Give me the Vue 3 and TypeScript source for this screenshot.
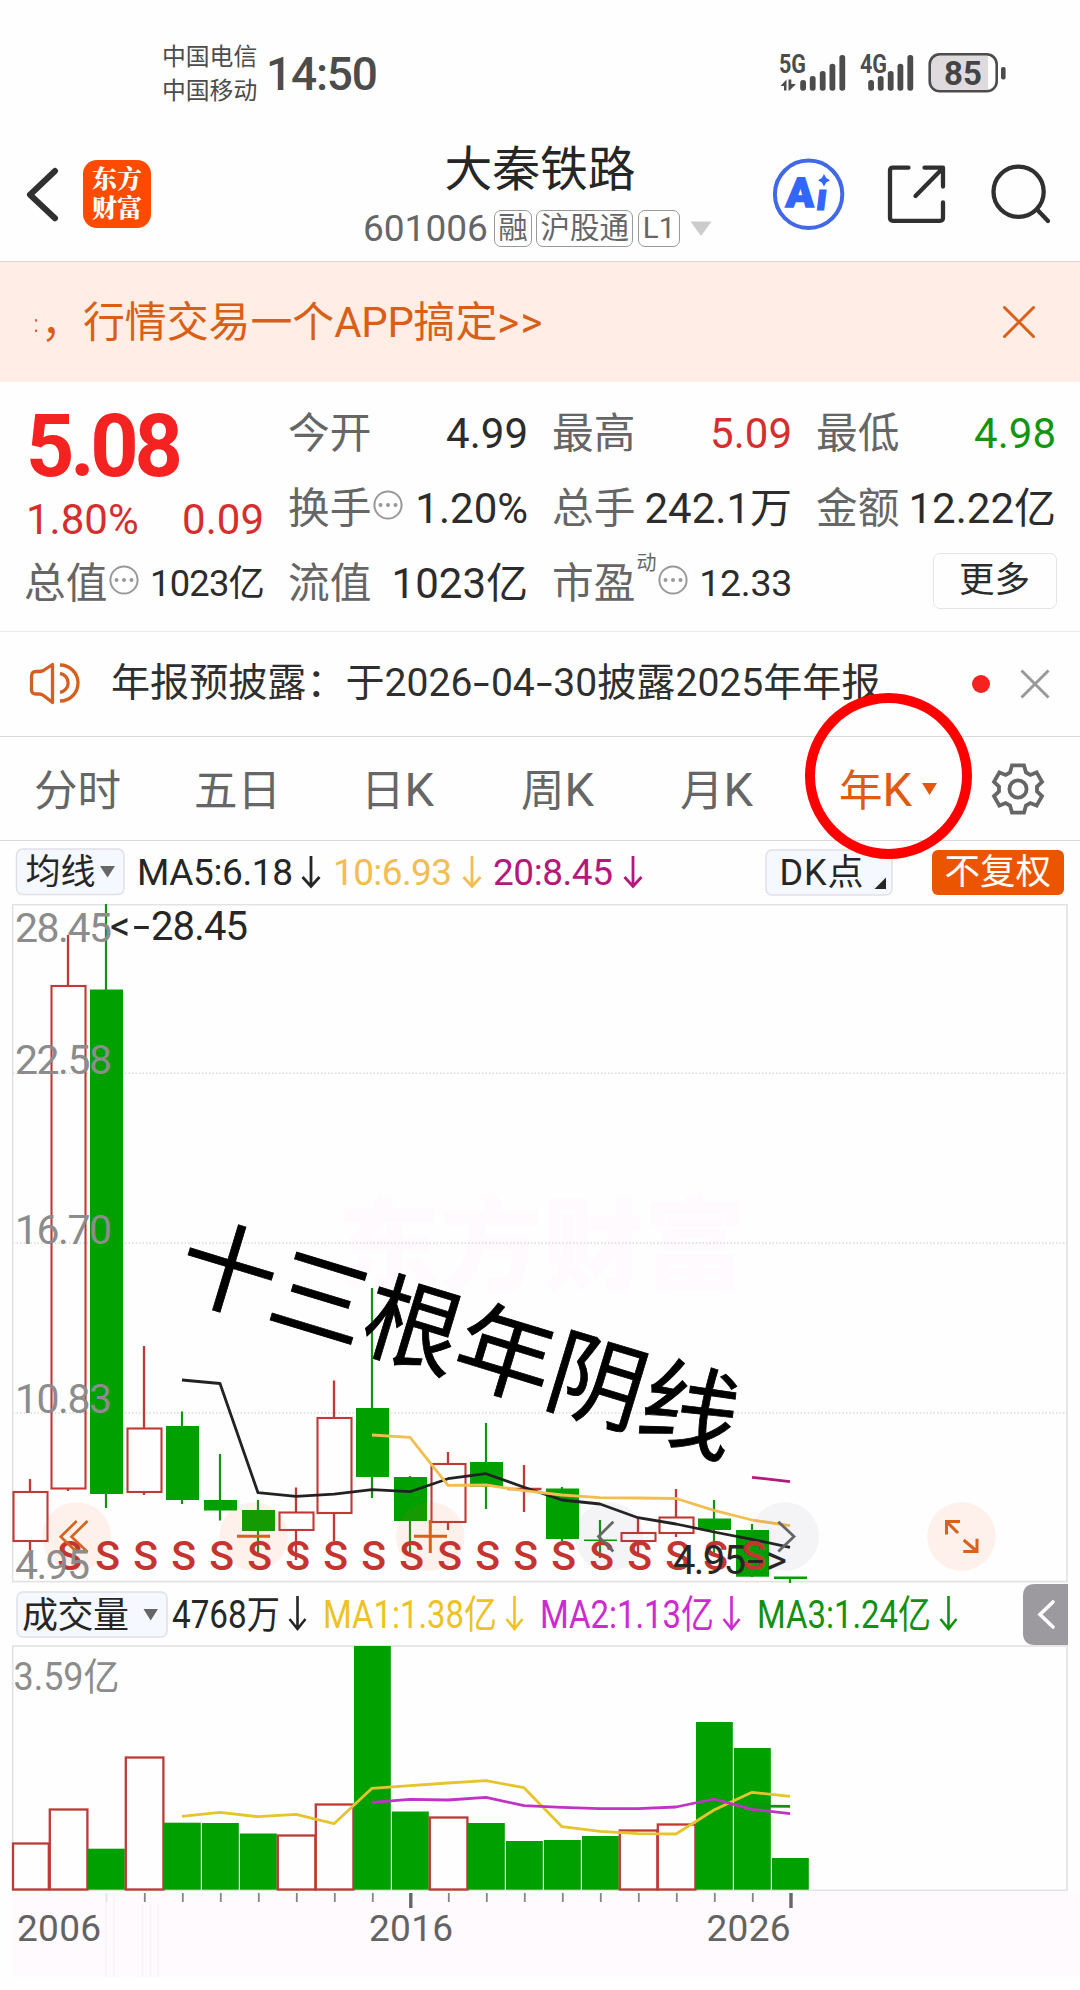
<script setup lang="ts">
type Point = [number, number]

interface Candle {
  up: boolean
  high: number
  top: number
  bottom: number
  low: number
  volume: number
}

const STEP = 38
const FIRST = 30
const cx = (i: number): number => FIRST + STEP * i

const raw: [number, number, number, number, number, number][] = [
  [1, 1479, 1492, 1541, 1563, 1843],
  [1, 935, 986, 1488.5, 1491, 1809],
  [0, 904, 989.5, 1494, 1508, 1848.7],
  [1, 1346, 1428.5, 1492, 1495, 1757],
  [0, 1411.5, 1426, 1500, 1504, 1822.7],
  [0, 1454, 1500, 1510.5, 1520.5, 1823],
  [0, 1500, 1510, 1531, 1555, 1833.5],
  [1, 1487.5, 1512.5, 1530, 1560, 1835],
  [1, 1380.5, 1418, 1513, 1541, 1804],
  [0, 1288, 1408, 1477, 1498, 1646],
  [0, 1476, 1477, 1521, 1553, 1811.5],
  [1, 1452, 1464, 1522, 1530, 1817],
  [0, 1423, 1462, 1487, 1509, 1823],
  [1, 1465, 1489, 1489, 1512, 1841],
  [0, 1487, 1488.5, 1539, 1541, 1840],
  [0, 1520, 1539.5, 1541, 1558, 1836],
  [1, 1518, 1533, 1541, 1555, 1830],
  [1, 1489, 1517.5, 1533, 1537, 1824],
  [0, 1500, 1518.5, 1530, 1555, 1722],
  [0, 1524, 1530, 1576.7, 1577, 1748],
  [0, 1577, 1576.5, 1579, 1583, 1858],
]

const candles: Candle[] = raw.map(([up, high, top, bottom, low, volume]) => ({
  up: up === 1, high, top, bottom, low, volume,
}))

// The 2019 volume bar is green although its candle closed flat.
const volumeUp = (i: number): boolean => candles[i].up && i !== 13

const line = (start: number, ys: number[]): string =>
  ys.map((y, i): Point => [cx(start + i), y]).map((p) => p.join(',')).join(' ')

const ma5 = line(4, [1380, 1383.5, 1492.7, 1496.3, 1494.2, 1489.7, 1491.7, 1478.7, 1473.7, 1487.3, 1500, 1504, 1517.7, 1524, 1532, 1539.3, 1547.3])
const ma10 = line(9, [1435, 1437.3, 1485.3, 1485, 1490.7, 1495, 1497.7, 1498, 1498.5, 1510.3, 1520, 1525.7])
const ma20 = line(19, [1477.3, 1481.7])
const vol1 = line(4, [1816.3, 1812.3, 1816.7, 1814.3, 1823.7, 1788.3, 1785.7, 1783, 1780.7, 1787.7, 1826.7, 1831.3, 1833.7, 1834, 1810, 1792.3, 1796.3])
const vol2 = line(9, [1802.3, 1799.3, 1800, 1797.3, 1805.7, 1807.3, 1808.7, 1808.7, 1807, 1799, 1809.3, 1813.7])

const gridLines = [1073.2, 1243, 1413]
const axis = [
  { y: 942, text: '28.45', w: 97 },
  { y: 1074, text: '22.58', w: 97 },
  { y: 1244, text: '16.70', w: 97 },
  { y: 1413, text: '10.83', w: 97 },
  { y: 1578.5, text: '4.95', w: 75 },
]

const barsA = [
  { x: 803.1, y: 80 }, { x: 812.7, y: 76 }, { x: 822.7, y: 71 }, { x: 832.4, y: 63.7 }, { x: 842.3, y: 55 },
]
const barsB = barsA.map((b) => ({ x: b.x + 68, y: b.y }))

const tabs = [
  { name: '分时', unit: '' },
  { name: '五日', unit: '' },
  { name: '日', unit: 'K' },
  { name: '周', unit: 'K' },
  { name: '月', unit: 'K' },
]
const years = [
  { x: 17, text: '2006' },
  { x: 369, text: '2016' },
  { x: 706.5, text: '2026' },
]

const maLegend = [
  { x: 137, w: 156, text: 'MA5:6.18', color: '#262626', arrow: 311 },
  { x: 333, w: 119, text: '10:6.93', color: '#f3bd52', arrow: 472 },
  { x: 493, w: 120, text: '20:8.45', color: '#b5187c', arrow: 633 },
]
const volLegend = [
  { x: 172, w: 108, text: '4768万', color: '#262626', arrow: 297.5 },
  { x: 323, w: 174, text: 'MA1:1.38亿', color: '#efc224', arrow: 514.5 },
  { x: 540, w: 174, text: 'MA2:1.13亿', color: '#cc2bd0', arrow: 731.5 },
  { x: 757, w: 174, text: 'MA3:1.24亿', color: '#119011', arrow: 948.5 },
]
const gearPath = 'M-6,-23.6 H6 L8,-16.6 L12.3,-14.1 L18.6,-16.6 L24,-7.2 L19,-2.4 V2.4 L24,7.2 L18.6,16.6 L12.3,14.1 L8,16.6 L6,23.6 H-6 L-8,16.6 L-12.3,14.1 L-18.6,16.6 L-24,7.2 L-19,2.4 V-2.4 L-24,-7.2 L-18.6,-16.6 L-12.3,-14.1 L-8,-16.6 Z'
</script>

<template>
  <main class="screen">
    <header class="status">
      <div class="carriers"><span>中国电信</span><span>中国移动</span></div>
      <div class="clock">14:50</div>
      <svg class="radio" width="240" height="50" viewBox="775 48 240 50">
        <g fill="#4c4c4c">
          <g font-weight="700" font-size="25">
            <text x="779" y="73" textLength="27" lengthAdjust="spacingAndGlyphs">5G</text>
            <text x="860" y="73" textLength="27" lengthAdjust="spacingAndGlyphs">4G</text>
          </g>
          <rect v-for="b in [...barsA, ...barsB]" :key="b.x" :x="b.x - 2.9" :y="b.y" width="5.8" :height="90.7 - b.y" rx="2.7" />
          <path d="M780.5 86 L786.5 79.5 V90.5 H784 V86 Z M788.5 79.5 H791.3 V84 L796 84 L789.5 90.5 H788.5 Z" />
        </g>
        <path d="M938 55 H988 V90.5 H938 Q930 90.5 930 82 V64 Q930 55 938 55 Z" fill="#dedade" />
        <rect x="929.7" y="54.3" width="67" height="37" rx="10" fill="none" stroke="#4c4c4c" stroke-width="2.6" />
        <rect x="1001" y="67" width="4.6" height="12.4" rx="2" fill="#4c4c4c" />
        <text x="944" y="85" font-size="33" font-weight="700" fill="#444" textLength="38">85</text>
      </svg>
    </header>

    <nav class="titlebar">
      <svg class="back" width="34" height="60" viewBox="26 165 34 60">
        <path d="M55 171 L30 194.7 L55 218.3" fill="none" stroke="#303030" stroke-width="6" stroke-linecap="round" stroke-linejoin="round" />
      </svg>
      <div class="logo"><span>东方</span><span>财富</span></div>
      <div class="heading">
        <h1>大秦铁路</h1>
        <div class="sub">
          <span class="code">601006</span>
          <span class="tag">融</span><span class="tag">沪股通</span><span class="tag">L1</span>
          <svg class="drop" width="22" height="15" viewBox="0 0 22 15"><path d="M0.5 .5 H21.5 L11 15 Z" fill="#ccc" /></svg>
        </div>
      </div>
      <svg class="actions" width="290" height="76" viewBox="770 156 290 76">
        <circle cx="808.6" cy="194.3" r="33.7" fill="#fff" stroke="#4169e6" stroke-width="4" />
        <g fill="#3366ff" stroke="#3366ff" stroke-width="1.6" font-weight="900" font-size="41">
          <text transform="translate(785.5 207) skewX(-3)" textLength="28" lengthAdjust="spacingAndGlyphs">A</text>
          <text transform="translate(815 209.5) skewX(-7)" font-size="38" stroke-width="1">ı</text>
        </g>
        <path d="M824 174 L826.2 178 L830 180.2 L826.2 182.5 L824 186.5 L821.8 182.5 L818 180.2 L821.8 178 Z" fill="#3366ff" />
        <g fill="none" stroke="#303030" stroke-width="4.3" stroke-linecap="round" stroke-linejoin="round">
          <path d="M908.5 167.7 H893 Q890 167.7 890 170.7 V217.8 Q890 220.8 893 220.8 H940 Q943 220.8 943 217.8 V202.5" />
          <path d="M924.5 167.7 H943 V186.5 M942 169 L915.5 196" />
          <circle cx="1018.6" cy="191.7" r="25.1" />
          <path d="M1037.5 210 L1048 221" />
        </g>
      </svg>
    </nav>

    <section class="banner">
      <div class="marquee"><i>:</i>，行情交易一个<b>APP</b>搞定<em>&gt;&gt;</em></div>
      <svg width="34" height="34" viewBox="-17 -17 34 34"><path d="M-14.5 -14.5 L14.5 14.5 M14.5 -14.5 L-14.5 14.5" stroke="#db5e19" stroke-width="3" stroke-linecap="round" /></svg>
    </section>

    <section class="quote">
      <div class="col first">
        <div class="price">5.08</div>
        <div class="change"><span>1.80%</span><span>0.09</span></div>
        <div class="cell"><label>总值</label><svg class="info" viewBox="-15 -15 30 30"><circle r="13.6" /><path d="M-7.5 0 h.01 M0 0 h.01 M7.5 0 h.01" /></svg><span class="small">1023亿</span></div>
      </div>
      <div class="col">
        <div class="cell"><label>今开</label><span>4.99</span></div>
        <div class="cell"><label>换手</label><svg class="info" viewBox="-15 -15 30 30"><circle r="13.6" /><path d="M-7.5 0 h.01 M0 0 h.01 M7.5 0 h.01" /></svg><span>1.20%</span></div>
        <div class="cell"><label>流值</label><span>1023亿</span></div>
      </div>
      <div class="col">
        <div class="cell"><label>最高</label><span class="up">5.09</span></div>
        <div class="cell"><label>总手</label><span>242.1万</span></div>
        <div class="cell"><label>市盈</label><sup>动</sup><svg class="info" viewBox="-15 -15 30 30"><circle r="13.6" /><path d="M-7.5 0 h.01 M0 0 h.01 M7.5 0 h.01" /></svg><span class="small mid">12.33</span></div>
      </div>
      <div class="col last">
        <div class="cell"><label>最低</label><span class="down">4.98</span></div>
        <div class="cell"><label>金额</label><span>12.22亿</span></div>
        <button class="more">更多</button>
      </div>
    </section>

    <section class="notice">
      <svg width="54" height="48" viewBox="28 660 54 48" fill="none" stroke="#d4601f" stroke-width="3.3" stroke-linejoin="round">
        <path d="M52.5 664.5 V702.5 L43.5 695.5 Q41.5 694 39 694 H36 Q31.5 694 31.5 689.5 V676.5 Q31.5 671.5 36 671.5 H39 Q41.5 671.5 43.5 670.5 Z" />
        <path d="M60 673.5 A9.5 9.5 0 0 1 60 692.3 M60 665 A18 18 0 0 1 60 701" />
      </svg>
      <p>年报预披露：于2026<i>-</i>04<i>-</i>30披露2025年年报</p>
      <span class="dot"></span>
      <svg class="dismiss" width="30" height="30" viewBox="-15 -15 30 30"><path d="M-13.5 -13.5 L13.5 13.5 M13.5 -13.5 L-13.5 13.5" stroke="#999" stroke-width="3" /></svg>
    </section>

    <section class="tabs">
      <span v-for="t in tabs" :key="t.name" class="tab">{{ t.name }}<b>{{ t.unit }}</b></span>
      <span class="tab active">年<b>K</b></span>
      <svg class="tri" width="15" height="12" viewBox="0 0 15 12"><path d="M0 0 H15 L7.5 12 Z" fill="#e4570c" /></svg>
      <svg class="gear" width="54" height="54" viewBox="-27 -27 54 54" fill="none" stroke="#666" stroke-width="3.8">
        <path :d="gearPath" /><circle r="8.6" />
      </svg>
      <div class="ring"></div>
    </section>

    <section class="legend">
      <svg width="1080" height="63" viewBox="0 841 1080 63">
        <g fill="#f5f8fe" stroke="#e0e0e8" stroke-width="1.5">
          <rect x="16.5" y="849" width="107.5" height="45.5" rx="6" />
          <rect x="766" y="850" width="126" height="45" rx="6" />
        </g>
        <rect x="932" y="850" width="132" height="45" rx="6" fill="#ec5500" />
        <text x="25.5" y="884" font-size="35" fill="#262626">均线</text>
        <path d="M100 866 H115 L107.5 877.5 Z" fill="#666" />
        <g v-for="m in maLegend" :key="m.x" :fill="m.color" :stroke="m.color">
          <text :x="m.x" y="885" font-size="37" stroke="none" :textLength="m.w">{{ m.text }}</text>
          <path :d="`M${m.arrow} 856 V886 M${m.arrow - 8.5} 877 L${m.arrow} 886.5 L${m.arrow + 8.5} 877`" fill="none" stroke-width="2.8" />
        </g>
        <text x="779.5" y="884.5" font-size="36" fill="#262626" textLength="84">DK点</text>
        <path d="M886 877.5 V889 H874.5 Z" fill="#262626" />
        <text x="944.5" y="884.3" font-size="35.5" fill="#fff" textLength="106.5">不复权</text>
      </svg>
    </section>

    <section class="kline">
      <svg width="1080" height="679" viewBox="0 904 1080 679">
        <text x="338" y="1283" class="mark" textLength="408">东方财富</text>
        <g stroke="#c9c9c9" stroke-width="1" stroke-dasharray="1.5 2">
          <line v-for="y in gridLines" :key="y" x1="13" x2="1067" :y1="y" :y2="y" />
        </g>
        <rect x="12.7" y="904.6" width="1054.3" height="677" fill="none" stroke="#e2e2e2" stroke-width="1.6" />
        <g v-for="(c, i) in candles" :key="i">
          <template v-if="c.up">
            <path :d="`M${cx(i)} ${c.high} V${c.top} M${cx(i)} ${c.bottom} V${c.low}`" stroke="#bd3a36" stroke-width="2.3" />
            <path v-if="c.top === c.bottom" :d="`M${cx(i) - 16.5} ${c.top} h34`" stroke="#bd3a36" stroke-width="2.3" />
            <rect v-else :x="cx(i) - 16.5" :y="c.top" width="34" :height="c.bottom - c.top" fill="none" stroke="#bd3a36" stroke-width="2.1" />
          </template>
          <template v-else>
            <path :d="`M${cx(i)} ${c.high} V${c.low}`" stroke="#129412" stroke-width="2.2" />
            <rect :x="cx(i) - 16" :y="c.top" width="33" :height="c.bottom - c.top" fill="#00a000" />
          </template>
        </g>
        <g fill="none" stroke-width="2.8" stroke-linejoin="round">
          <polyline :points="ma5" stroke="#222" />
          <polyline :points="ma10" stroke="#f2be50" />
          <polyline :points="ma20" stroke="#b5187c" />
        </g>
        <g fill="#ff5a1e" fill-opacity=".085">
          <circle cx="76.7" cy="1536.5" r="34.3" /><circle cx="253.7" cy="1536.5" r="34.3" />
          <circle cx="430.3" cy="1536.5" r="34.3" /><circle cx="961.5" cy="1536.5" r="34.3" />
        </g>
        <g fill="#583c78" fill-opacity=".06">
          <circle cx="609" cy="1536.5" r="34.3" /><circle cx="784.7" cy="1536.5" r="34.3" />
        </g>
        <g class="sell"><text v-for="i in 19" :key="i" :x="cx(i) + 1.7" y="1570.3">S</text></g>
        <g fill="none" stroke="#d8611b" stroke-width="2.6">
          <path d="M87.5 1521 L71.5 1536.7 L87.5 1552 M76.7 1521 L60.7 1536.7 L76.7 1552" />
          <path d="M237 1536.3 H270 M414 1536.3 H447 M430.3 1520 V1553" stroke-width="3" />
          <path d="M960 1521.5 H946.5 V1534.5 M946.5 1521.5 L958 1533 M963.3 1551.5 H977 V1538.7 M977 1551.5 L963.7 1540" stroke-width="3" />
        </g>
        <path d="M613.3 1521.7 L598.5 1536.5 L613.3 1551.5 M778.3 1521.7 L794 1536.5 L778.3 1551.5" fill="none" stroke="#666" stroke-width="2.8" />
        <g class="axis"><text v-for="a in axis" :key="a.y" x="15" :y="a.y" :textLength="a.w">{{ a.text }}</text></g>
        <g class="peak">
          <text x="110" y="939.6">&lt;</text><text x="133" y="939.6" textLength="17" lengthAdjust="spacingAndGlyphs">-</text><text x="151" y="939.6" textLength="97">28.45</text>
          <text x="673" y="1574" textLength="73">4.95</text><text x="747" y="1574" textLength="17" lengthAdjust="spacingAndGlyphs">-</text><text x="766" y="1574">&gt;</text>
        </g>
        <text class="scrawl" transform="translate(172 1289.500) rotate(16.900)" textLength="579">十三根年阴线</text>
      </svg>
    </section>

    <section class="legend">
      <svg width="1080" height="62" viewBox="0 1583 1080 62">
        <rect x="17" y="1592" width="150" height="45" rx="6" fill="#f5f8fe" stroke="#e0e0e8" stroke-width="1.5" />
        <text x="22" y="1627.5" font-size="36" fill="#262626" textLength="107">成交量</text>
        <path d="M143.5 1609 H158 L150.7 1620.5 Z" fill="#666" />
        <g v-for="m in volLegend" :key="m.x" :fill="m.color" :stroke="m.color">
          <text :x="m.x" y="1627.7" font-size="38.5" stroke="none" :textLength="m.w" lengthAdjust="spacingAndGlyphs">{{ m.text }}</text>
          <path :d="`M${m.arrow} 1596 V1629 M${m.arrow - 8} 1619 L${m.arrow} 1629 L${m.arrow + 8} 1619`" fill="none" stroke-width="2.6" />
        </g>
        <path d="M1068 1584 H1035 Q1023 1584 1023 1596 V1633 Q1023 1645 1035 1645 H1068 Z" fill="#9c9a9e" />
        <path d="M1053 1602 L1040 1614.5 L1053 1627" fill="none" stroke="#fff" stroke-width="3.6" stroke-linecap="round" />
      </svg>
    </section>

    <section class="volume">
      <svg width="1080" height="332" viewBox="0 1645 1080 332">
        <rect x="12.5" y="1892" width="1067.5" height="85" fill="#fefafe" />
        <path d="M106 1893 V1977 M114 1893 V1977 M142.5 1904 V1977 M150.5 1904 V1977 M158 1904 V1977" stroke="#f8f4f8" stroke-width="1.5" />
        <rect x="12.7" y="1646" width="1054.3" height="244.3" fill="#fefefe" stroke="#e2e2e2" stroke-width="1.6" />
        <template v-for="(c, i) in candles" :key="i">
          <rect v-if="!volumeUp(i)" :x="cx(i) - 18" :y="c.volume" width="36.8" :height="1889.7 - c.volume" fill="#00a000" />
          <rect v-else :x="Math.max(cx(i) - 18.2, 13)" :y="c.volume + .5" :width="i === 0 ? 35.8 : 37.6" :height="1889 - c.volume" fill="#fefefe" stroke="#bd3a36" stroke-width="2.3" />
        </template>
        <g fill="none" stroke-width="2.8" stroke-linejoin="round">
          <path d="M752 1806 L790 1806.4" stroke="#119011" />
          <polyline :points="vol1" stroke="#e6c42c" />
          <polyline :points="vol2" stroke="#c033c4" />
        </g>
        <g stroke="#858585" stroke-width="1.8">
          <line x1="106.5" x2="106.5" y1="1893" y2="1902" stroke="#e6e6e6" />
          <line v-for="i in 18" :key="i" :x1="cx(i + 2) + .8" :x2="cx(i + 2) + .8" y1="1893" y2="1902" />
          <path d="M410.8 1893 V1908 M791 1893 V1908" stroke="#666" stroke-width="3.4" />
        </g>
        <text x="13.5" y="1689.5" font-size="38" fill="#8c8c8c" textLength="106" lengthAdjust="spacingAndGlyphs">3.59亿</text>
        <text v-for="y in years" :key="y.x" :x="y.x" y="1941" font-size="37" fill="#636363" textLength="84">{{ y.text }}</text>
      </svg>
    </section>
  </main>
</template>

<style>
body { margin: 0; background: #fefefe; }
</style>

<style scoped>
.screen {
  width: 1080px;
  height: 1990px;
  overflow: hidden;
  background: #fefefe;
  color: #2c2c2c;
  font-family: Roboto, "Noto Sans CJK SC", sans-serif;
}
svg { display: block; flex: none; }
svg text { white-space: pre; }
.status { display: flex; height: 100px; padding: 40px 0 0 162px; box-sizing: border-box; color: #4c4c4c; }
.carriers { display: flex; flex-direction: column; width: 104px; font-size: 23.8px; line-height: 34px; }
.clock { width: 509px; font-size: 46px; line-height: 68px; font-weight: 500; letter-spacing: -1.2px; }
.radio { margin-top: 8px; }
.titlebar { display: flex; height: 162px; box-sizing: border-box; border-bottom: 1px solid #dadada; }
.back { margin: 65px 0 0 26px; }
.logo {
  display: flex; flex-direction: column; align-items: center;
  width: 68px; height: 65px; padding-top: 3px; margin: 60px 0 0 23px; border-radius: 14px; background: #ff4b00;
  color: #fff; font: 900 25px/29px "Noto Serif CJK SC", "Noto Sans CJK SC", sans-serif;
}
.heading { display: flex; flex-direction: column; width: 405px; margin: 42px 0 0 188px; }
.heading h1 { width: 400px; margin: 0 0 0 1px; text-align: center; font-size: 47.8px; line-height: 56px; font-weight: 400; color: #262626; }
.sub { display: flex; align-items: center; height: 37px; margin: 12px 0 0 24px; color: #666; }
.code { width: 131px; font-size: 37px; line-height: 37px; }
.tag {
  height: 35px; margin-right: 4.5px; padding: 0 3.2px; border: 1.3px solid #999; border-radius: 7px;
  font-size: 29.5px; line-height: 34px;
}
.tag:nth-of-type(4) { padding: 0 4px; }
.drop { margin: -1px 0 0 5px; }
.actions { margin: 56px 0 0 26px; }
.banner { display: flex; align-items: center; height: 120px; background: #ffede6; }
.marquee { display: flex; width: 967px; height: 60px; margin: 2px 0 0 35px; overflow: hidden; color: #d95f16; font-size: 41.9px; line-height: 60px; white-space: nowrap; }
.marquee i { width: 6px; font-size: 24px; font-style: normal; text-indent: -2px; line-height: 62px; }
.marquee b { font-weight: 400; letter-spacing: -.3px; }
.marquee em { font-style: normal; letter-spacing: 1.2px; }
.quote { display: flex; height: 249px; box-sizing: border-box; padding-left: 24px; }
.col { width: 240px; margin-right: 24px; padding-top: 12px; }
.col.last { margin-right: 0; }
.price { width: 200px; height: 97px; margin-left: 2px; font-size: 88px; line-height: 104px; font-weight: 700; color: #f52222; letter-spacing: -4.5px; transform: scaleX(.96); transform-origin: left; }
.change { display: flex; justify-content: space-between; height: 53px; margin-left: 2px; font-size: 42px; line-height: 57px; color: #d62e2e; }
.cell { display: flex; align-items: baseline; height: 75px; box-sizing: border-box; padding-top: 10px; font-size: 42px; line-height: 60px; }
.cell label { color: #666; font-size: 41.7px; }
.cell span { margin-left: auto; white-space: nowrap; }
.cell .small { position: relative; top: -2.5px; font-size: 36.3px; letter-spacing: -.8px; line-height: 50px; }
.cell .mid { font-size: 37.5px; letter-spacing: -.3px; }
.cell .up { color: #d62e2e; }
.cell .down { color: #129612; }
.cell sup { align-self: flex-start; margin: -1px 0 0 1px; font-size: 20px; line-height: 20px; color: #666; }
.info { align-self: flex-start; width: 30px; height: 30px; margin: 10.5px 0 0 2px; fill: none; stroke: #999; stroke-width: 2; }
.info path { stroke-width: 4; stroke-linecap: round; }
.more {
  display: block; width: 124px; height: 56px; margin: 9px 0 0 116.5px; padding: 0 0 1px; border: 1.5px solid #e4e4e6;
  border-radius: 7px; background: #fefefe; color: #2c2c2c; font: 35.5px/1 Roboto, "Noto Sans CJK SC", sans-serif;
}
.notice { display: flex; align-items: center; height: 105px; box-sizing: border-box; border-top: 1px solid #ebebeb; padding-left: 28px; }
.notice p { display: flex; width: 861px; margin: 0 0 2px 29px; font-size: 39.1px; line-height: 60px; white-space: nowrap; color: #2f2f2f; }
.notice p i { width: 18.5px; text-align: center; font-style: normal; transform: scaleX(1.5); }
.dot { width: 18px; height: 18px; border-radius: 50%; background: #f52222; }
.dismiss { margin-left: 30px; }
.tabs { position: relative; display: flex; align-items: center; height: 105px; box-sizing: border-box; border: solid #d8d8d8; border-width: 1px 0; padding-left: 34px; }
.tab { width: 160px; padding-top: 4px; font-size: 43.5px; line-height: 64px; color: #666; white-space: nowrap; }
.tab b { font-weight: 400; font-size: 47px; }
.tab:nth-child(2) { width: 167px; }
.tab:nth-child(3) { width: 160px; }
.tab:nth-child(4) { width: 159px; }
.tab:nth-child(5) { width: 159px; }
.tab.active { width: 83px; color: #e05a12; }
.gear { margin-left: 54px; }
.ring { position: absolute; left: 805px; top: -44.5px; width: 147px; height: 146px; border: 10px solid #fe0000; border-radius: 50%; z-index: 2; }
.mark { font: 900 102px "Noto Sans CJK SC", sans-serif; fill: #fefafe; }
.sell { font-size: 41px; font-weight: 500; fill: #c43531; text-anchor: middle; }
.axis { font-size: 41px; fill: #8c8c8c; }
.peak { font-size: 40px; fill: #262626; }
.scrawl { font: 400 97px "Noto Sans CJK SC", sans-serif; fill: #000; stroke: #000; stroke-width: .8px; }
</style>
